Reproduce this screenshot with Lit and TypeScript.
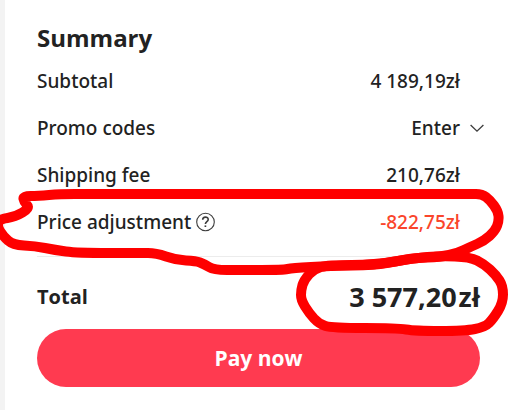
import { LitElement, html, css, svg } from "lit";
import { customElement, property, state } from "lit/decorators.js";

interface SummaryLine {
  label: string;
  value: string;
  kind?: "promo" | "adjustment";
}

const LINES: SummaryLine[] = [
  { label: "Subtotal", value: "4 189,19zł" },
  { label: "Promo codes", value: "Enter", kind: "promo" },
  { label: "Shipping fee", value: "210,76zł" },
  { label: "Price adjustment", value: "-822,75zł", kind: "adjustment" },
];

type Point = [number, number];

// Freehand marker strokes drawn over the summary.
const STROKES: Point[][] = [
  [
    [23, 196], [38, 196], [60, 194], [90, 194], [470, 194], [482, 194], [490, 200], [498, 211],
    [499, 221], [495, 231], [484, 241], [470, 247], [458, 253], [440, 257], [415, 258],
    [398, 261], [375, 265], [330, 266], [292, 268], [283, 270], [240, 270], [214, 270],
    [204, 264], [196, 261], [176, 260], [156, 253], [140, 253], [77, 253], [55, 250],
    [35, 246], [13, 245], [3, 236], [-3, 226], [0, 219], [15, 217], [30, 208], [24, 202],
  ],
  [
    [470, 257], [440, 256], [415, 258], [375, 265], [328, 265], [314, 269], [304, 280],
    [301, 290], [301, 300], [309, 313], [319, 324], [332, 328], [397, 328], [415, 331],
    [465, 331], [485, 327], [493, 319], [503, 303], [503, 286], [496, 275], [484, 264],
  ],
];

// Closed curve that rounds every corner by passing through segment midpoints.
function smooth(points: Point[]): string {
  const mid = (a: Point, b: Point) => `${(a[0] + b[0]) / 2} ${(a[1] + b[1]) / 2}`;
  const last = points[points.length - 1];
  const curves = points.map(
    (p, i) => `Q${p[0]} ${p[1]} ${mid(p, points[(i + 1) % points.length])}`
  );
  return `M${mid(last, points[0])} ${curves.join(" ")} Z`;
}

@customElement("summary-row")
class SummaryRow extends LitElement {
  static styles = css`
    :host {
      display: flex;
      justify-content: space-between;
      align-items: center;
      font-family: "Noto Sans", "Open Sans", sans-serif;
      font-size: 19px;
      line-height: 24px;
      font-weight: 500;
      padding-right: 20px;
    }
    :host([kind="promo"]) {
      padding-right: 0;
      margin-right: -4px;
    }
    .label {
      display: flex;
      align-items: center;
      gap: 5px;
    }
    .adjustment {
      color: #fa452b;
    }
    button {
      display: flex;
      align-items: center;
      padding: 0;
      border: 0;
      background: none;
      color: inherit;
      font: inherit;
      cursor: pointer;
    }
    .toggle {
      gap: 10px;
    }
    svg {
      display: block;
      fill: none;
      stroke: #3c3c3c;
    }
  `;

  @property({ attribute: false }) line!: SummaryLine;
  @state() private open = false;

  render() {
    const { label, value, kind } = this.line;
    return html`
      <span class="label">
        ${label}
        ${kind === "adjustment"
          ? html`<button aria-label="About price adjustment">
              <svg width="19" height="20" viewBox="0 0 19 20">
                <circle cx="9.5" cy="10" r="8.8" stroke-width="1.1" />
                <path d="M6.7 7.7 C6.7 4.3 12.2 4.3 12.2 7.5 C12.2 9.7 9.4 9.5 9.4 12" stroke-width="1.6" />
                <path d="M9.4 13.4 V15" stroke-width="1.7" />
              </svg>
            </button>`
          : ""}
      </span>
      ${kind === "promo"
        ? html`<button
            class="toggle"
            aria-expanded=${this.open}
            @click=${() => (this.open = !this.open)}
          >
            ${value}
            <svg width="14" height="9" viewBox="0 0 14 9">
              <path d="M0.6 1 L7 7.2 L13.4 1" stroke-width="1.3" />
            </svg>
          </button>`
        : html`<span class=${kind ?? "value"}>${value}</span>`}
    `;
  }
}

@customElement("app-root")
class AppRoot extends LitElement {
  static styles = css`
    :host {
      display: block;
      position: relative;
      box-sizing: border-box;
      min-height: 100vh;
      overflow: hidden;
      padding: 22px 31px 23px 37px;
      background: linear-gradient(to right, #f3f3f3 5px, #fff 5px);
      color: #222;
      font-family: "Open Sans", "Noto Sans", sans-serif;
    }
    h2 {
      margin: 0 0 15px;
      font-size: 24px;
      line-height: 32px;
      font-weight: 700;
    }
    .rows {
      display: flex;
      flex-direction: column;
      gap: 23px;
      padding-bottom: 22px;
      border-bottom: 1px solid #ececec;
    }
    .total {
      display: flex;
      justify-content: space-between;
      align-items: center;
      margin: 22px 0 14px;
      font-size: 20px;
      line-height: 36px;
      font-weight: 700;
    }
    .amount {
      display: flex;
      gap: 2px;
      font-size: 27px;
    }
    .pay {
      display: block;
      width: 100%;
      height: 58px;
      padding: 0;
      border: 0;
      border-radius: 29px;
      background: #ff3a50;
      color: #fff;
      font: 700 21px/28px "Open Sans", "Noto Sans", sans-serif;
      cursor: pointer;
    }
    .marker {
      position: absolute;
      top: 0;
      left: 0;
      width: 511px;
      height: 410px;
      pointer-events: none;
      fill: none;
      stroke: #fe0000;
      stroke-width: 10px;
      stroke-linejoin: round;
      stroke-linecap: round;
    }
  `;

  render() {
    return html`
      <h2>Summary</h2>
      <div class="rows">
        ${LINES.map(
          (line) => html`<summary-row kind=${line.kind ?? "plain"} .line=${line}></summary-row>`
        )}
      </div>
      <div class="total">
        <span>Total</span>
        <span class="amount"><span>3 577,20</span><span>zł</span></span>
      </div>
      <button class="pay">Pay now</button>
      <svg class="marker" viewBox="0 0 511 410" aria-hidden="true">
        ${STROKES.map((points) => svg`<path d=${smooth(points)} />`)}
      </svg>
    `;
  }
}
